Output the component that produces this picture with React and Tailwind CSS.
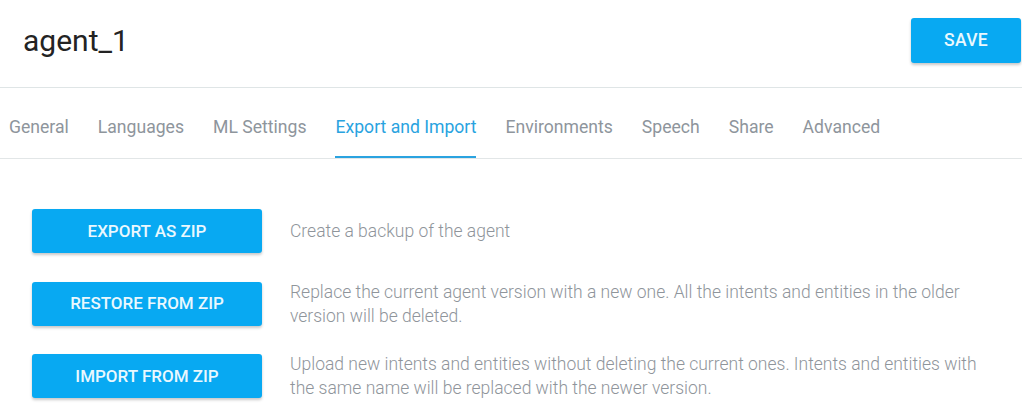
const tabs = [
  'General',
  'Languages',
  'ML Settings',
  'Export and Import',
  'Environments',
  'Speech',
  'Share',
  'Advanced',
];

const actions = [
  { label: 'EXPORT AS ZIP', text: 'Create a backup of the agent' },
  {
    label: 'RESTORE FROM ZIP',
    text: 'Replace the current agent version with a new one. All the intents and entities in the older version will be deleted.',
  },
  {
    label: 'IMPORT FROM ZIP',
    text: 'Upload new intents and entities without deleting the current ones. Intents and entities with the same name will be replaced with the newer version.',
  },
];

function BlueButton({ children, className = '' }) {
  return (
    <button
      type="button"
      className={`rounded-[3px] bg-[#08a9f2] font-medium text-[#eaf8fe] shadow-[0_2px_3px_rgba(0,0,0,0.22)] ${className}`}
    >
      {children}
    </button>
  );
}

export default function App() {
  return (
    <div className="h-[418px] w-[1022px] overflow-hidden bg-white font-['Roboto',sans-serif]">
      <div className="flex items-center justify-between border-b border-[#dfe5e6] pb-[24px] pl-[23px] pr-[1px] pt-[18px]">
        <h1 className="text-[30px] font-normal leading-[34px] text-[#232323]">agent_1</h1>
        <BlueButton className="h-[45px] w-[110px] text-[17.5px] tracking-[0.02em]">SAVE</BlueButton>
      </div>

      <div className="flex gap-[29px] border-b border-[#e2e6e7] pl-[9px]">
        {tabs.map((t) => (
          <div
            key={t}
            className={`pb-[19px] pt-[29px] text-[17.6px] leading-[20px] ${
              t === 'Export and Import'
                ? 'border-b-2 border-[#2aa3e0] text-[#29a3df]'
                : 'border-b-2 border-transparent text-[#8e959c]'
            }`}
          >
            {t}
          </div>
        ))}
      </div>

      <div className="flex flex-col pl-[32px] pt-[36px]">
        {actions.map((a) => (
          <div key={a.label} className="flex h-[72.5px] items-center gap-[28px]">
            <BlueButton className="h-[44px] w-[230px] shrink-0 text-[17px]">{a.label}</BlueButton>
            <p className="w-[695px] text-[17.5px] font-light leading-[24px] text-[#8f959b]">{a.text}</p>
          </div>
        ))}
      </div>
    </div>
  );
}
